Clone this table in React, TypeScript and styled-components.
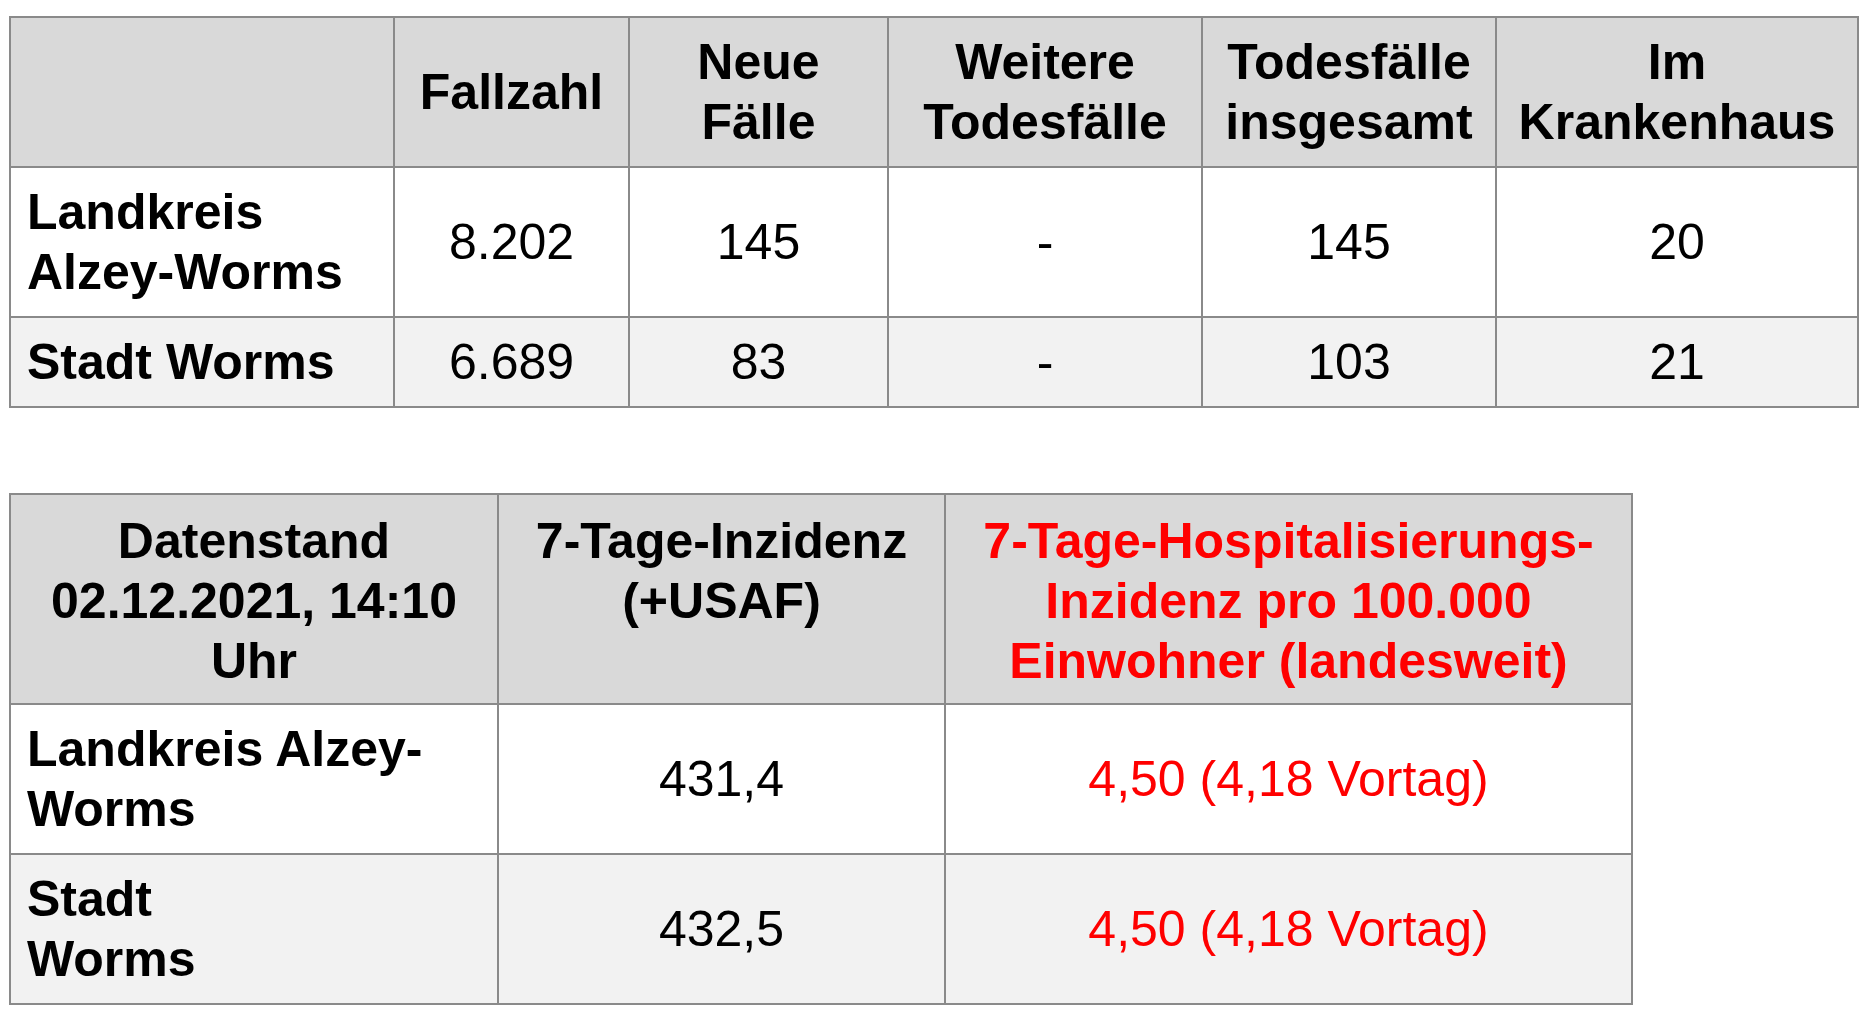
import React from "react";
import styled, { createGlobalStyle } from "styled-components";

const Global = createGlobalStyle`
  html, body { margin: 0; padding: 0; background: #ffffff; }
  body { padding: 16px 0 0 9px; font-family: "Liberation Sans", Arial, sans-serif; }
`;

const Page = styled.div`
  display: flex;
  flex-direction: column;
  align-items: flex-start;
  gap: 85px;
`;

const Table = styled.table<{ $w: number }>`
  border-collapse: collapse;
  table-layout: fixed;
  width: ${(p) => p.$w}px;
  font-family: "Liberation Sans", Arial, sans-serif;
  font-size: 50px;
  line-height: 60px;
  color: #000;
`;

const Row = styled.tr<{ $bg: string }>`
  background: ${(p) => p.$bg};
`;

const Cell = styled.td<{ $head?: boolean; $left?: boolean; $red?: boolean; $top?: boolean }>`
  border: 2px solid #8a8a8a;
  padding: ${(p) => (p.$left ? "14px 6px 14px 16px" : "14px 8px")};
  text-align: ${(p) => (p.$left ? "left" : "center")};
  vertical-align: ${(p) => (p.$top ? "top" : "middle")};
  font-weight: ${(p) => (p.$head || p.$left ? 700 : 400)};
  color: ${(p) => (p.$red ? "#ff0000" : "#000")};
`;

const HeadRow = styled(Row)`
  & > td {
    padding-top: 16px;
    padding-bottom: 12px;
  }
`;

const HEAD = "#d9d9d9";
const ODD = "#ffffff";
const EVEN = "#f2f2f2";

const t1Cols = [384, 235, 259, 314, 294, 362];
const t2Cols = [488, 447, 687];

export default function App() {
  return (
    <>
      <Global />
      <Page>
        <Table $w={1848}>
          <colgroup>
            {t1Cols.map((w, i) => (
              <col key={i} style={{ width: w }} />
            ))}
          </colgroup>
          <tbody>
            <Row $bg={HEAD}>
              <Cell $head></Cell>
              <Cell $head>Fallzahl</Cell>
              <Cell $head>Neue Fälle</Cell>
              <Cell $head>Weitere Todesfälle</Cell>
              <Cell $head>Todesfälle insgesamt</Cell>
              <Cell $head>Im Krankenhaus</Cell>
            </Row>
            <Row $bg={ODD}>
              <Cell $left>Landkreis Alzey-Worms</Cell>
              <Cell>8.202</Cell>
              <Cell>145</Cell>
              <Cell>-</Cell>
              <Cell>145</Cell>
              <Cell>20</Cell>
            </Row>
            <Row $bg={EVEN}>
              <Cell $left>Stadt Worms</Cell>
              <Cell>6.689</Cell>
              <Cell>83</Cell>
              <Cell>-</Cell>
              <Cell>103</Cell>
              <Cell>21</Cell>
            </Row>
          </tbody>
        </Table>
        <Table $w={1622}>
          <colgroup>
            {t2Cols.map((w, i) => (
              <col key={i} style={{ width: w }} />
            ))}
          </colgroup>
          <tbody>
            <HeadRow $bg={HEAD}>
              <Cell $head>Datenstand 02.12.2021, 14:10 Uhr</Cell>
              <Cell $head $top>7-Tage-Inzidenz (+USAF)</Cell>
              <Cell $head $red>
                7-Tage-Hospitalisierungs-Inzidenz pro 100.000 Einwohner (landesweit)
              </Cell>
            </HeadRow>
            <Row $bg={ODD}>
              <Cell $left>Landkreis Alzey-Worms</Cell>
              <Cell>431,4</Cell>
              <Cell $red>4,50 (4,18 Vortag)</Cell>
            </Row>
            <Row $bg={EVEN}>
              <Cell $left>
                Stadt
                <br />
                Worms
              </Cell>
              <Cell>432,5</Cell>
              <Cell $red>4,50 (4,18 Vortag)</Cell>
            </Row>
          </tbody>
        </Table>
      </Page>
    </>
  );
}
